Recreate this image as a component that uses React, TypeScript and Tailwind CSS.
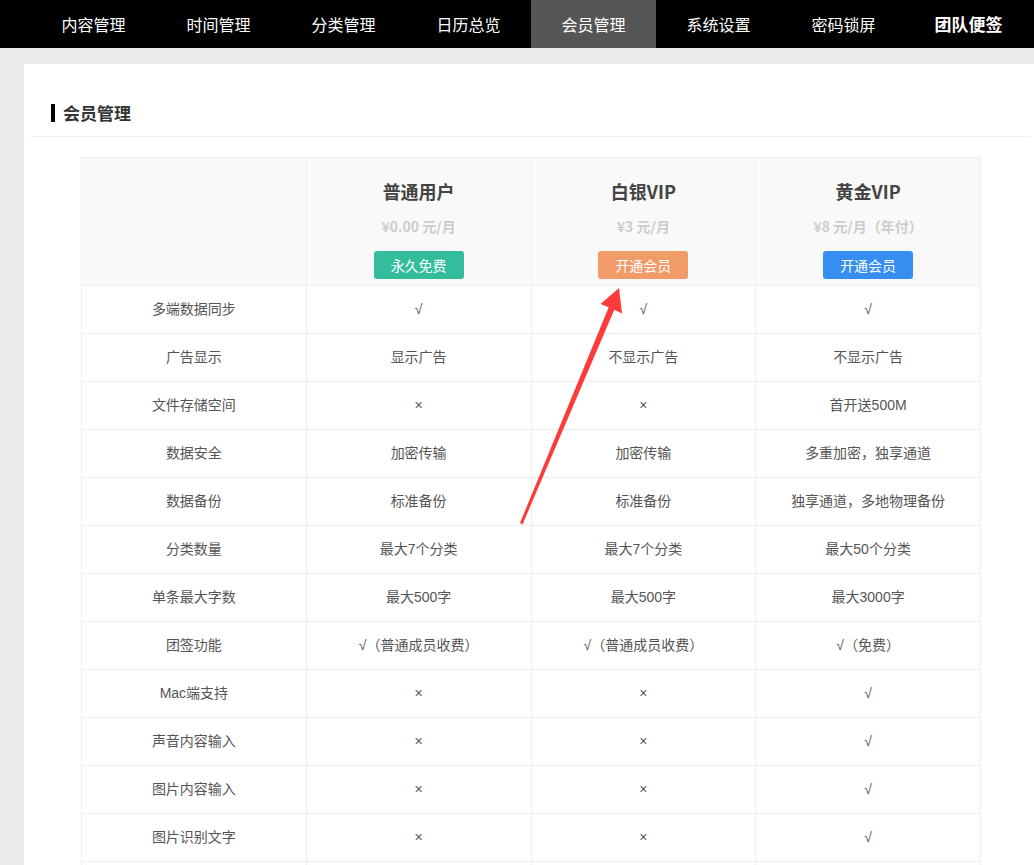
import React from "react";

const navItems = ["内容管理", "时间管理", "分类管理", "日历总览", "会员管理", "系统设置", "密码锁屏", "团队便签"];

const plans = [
  { name: "普通用户", price: "¥0.00 元/月", btn: "永久免费", color: "bg-[#33bd9d]" },
  { name: "白银VIP", price: "¥3 元/月", btn: "开通会员", color: "bg-[#f19b68]" },
  { name: "黄金VIP", price: "¥8 元/月（年付）", btn: "开通会员", color: "bg-[#368ff0]" },
];

const rows: string[][] = [
  ["多端数据同步", "√", "√", "√"],
  ["广告显示", "显示广告", "不显示广告", "不显示广告"],
  ["文件存储空间", "×", "×", "首开送500M"],
  ["数据安全", "加密传输", "加密传输", "多重加密，独享通道"],
  ["数据备份", "标准备份", "标准备份", "独享通道，多地物理备份"],
  ["分类数量", "最大7个分类", "最大7个分类", "最大50个分类"],
  ["单条最大字数", "最大500字", "最大500字", "最大3000字"],
  ["团签功能", "√（普通成员收费）", "√（普通成员收费）", "√（免费）"],
  ["Mac端支持", "×", "×", "√"],
  ["声音内容输入", "×", "×", "√"],
  ["图片内容输入", "×", "×", "√"],
  ["图片识别文字", "×", "×", "√"],
  ["", "", "", ""],
];

const font = { fontFamily: '"Noto Sans CJK SC", "Noto Sans", sans-serif' };
const bodyFont = { fontFamily: '"Liberation Sans", "Noto Sans CJK SC", sans-serif' };

export default function App() {
  return (
    <div className="relative min-h-[865px] bg-[#ebebeb] overflow-hidden" style={font}>
      {/* Top nav */}
      <nav className="h-12 bg-black flex pl-[31px]">
        {navItems.map((item, i) => (
          <a
            key={item}
            href="#"
            className={
              "w-[125px] h-12 flex items-center justify-center text-white " +
              (i === 4 ? "bg-[#555555] text-[16px]" : i === 7 ? "font-bold text-[17px]" : "text-[16px]")
            }
          >
            {item}
          </a>
        ))}
      </nav>

      {/* Content panel */}
      <div className="mt-4 ml-6 bg-white pl-[7px] pr-1 pb-10">
        <div className="h-[73px] pt-[38px] border-b border-[#eeeeee] pl-5 flex items-start">
          <span className="w-1 h-[18px] bg-black mt-[2px]" />
          <h2 className="ml-2 text-[17px] leading-[22px] font-bold text-[#333333]">会员管理</h2>
        </div>

        <table className="mt-5 ml-[50px] w-[900px] table-fixed border-collapse text-[14px] text-[#555555]">
          <thead>
            <tr className="bg-[#f9f9f9]">
              <th className="border border-[#eeeeee] h-[128px]" />
              {plans.map((p) => (
                <th key={p.name} className="border border-[#eeeeee] h-[128px] align-top font-normal">
                  <div className="flex flex-col items-center pt-[20px]">
                    <div className="text-[18px] leading-[26px] font-bold text-[#444444]">{p.name}</div>
                    <div className="mt-[12px] text-[14px] leading-[20px] font-bold text-[#cccccc]">{p.price}</div>
                    <button
                      className={"mt-[15px] w-[90px] h-[28px] rounded-[3px] text-white text-[14px] " + p.color}
                    >
                      {p.btn}
                    </button>
                  </div>
                </th>
              ))}
            </tr>
          </thead>
          <tbody style={bodyFont}>
            {rows.map((r, i) => (
              <tr key={i}>
                {r.map((c, j) => (
                  <td key={j} className="border border-[#eeeeee] h-[48px] text-center">
                    {c}
                  </td>
                ))}
              </tr>
            ))}
          </tbody>
        </table>
      </div>

      {/* Red annotation arrow */}
      <svg className="absolute top-0 left-0 pointer-events-none" width="1034" height="865">
        <polygon
          points="520,523 608.7,307.3 600.5,304 619,288 622,313.5 614.3,309.7 522.5,524.5"
          fill="#ff3a3a"
        />
      </svg>
    </div>
  );
}
